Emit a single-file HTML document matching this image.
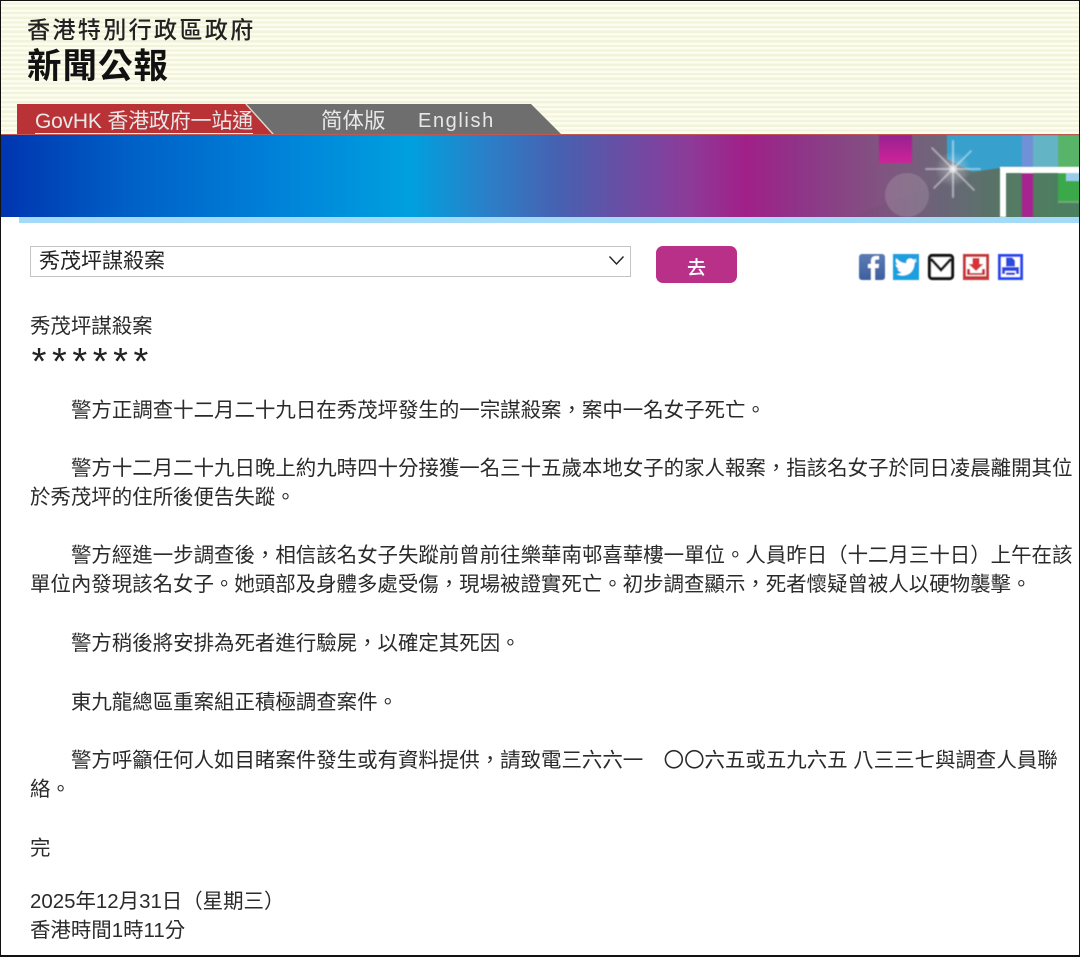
<!DOCTYPE html>
<html lang="zh-Hant"><head><meta charset="utf-8"><title>秀茂坪謀殺案</title>
<style>
html,body{margin:0;padding:0;background:#fff}
#p{position:relative;width:1080px;height:957px;overflow:hidden;background:#fff;font-family:"Liberation Sans","Noto Sans CJK TC",sans-serif;color:#2a2a2a}
.a{position:absolute}
.l{position:absolute;left:30px;font-size:20.45px;line-height:30px;height:30px;white-space:pre;color:#2a2a2a}
.i{left:71px}
.tab{position:absolute;top:105px;height:31px;line-height:33px;font-size:21px;color:#e8e8e8;white-space:pre}
</style></head><body><div id="p">
<div class="a" style="left:0;top:0;width:1080px;height:135px;background:repeating-linear-gradient(180deg,#fdfdef 0,#fdfdef 2.5px,#f3f3dc 2.5px,#f3f3dc 4.7px)"></div>
<div class="a" style="left:27px;top:13px;font-size:23.2px;line-height:34px;letter-spacing:2.2px;color:#222;white-space:pre;font-weight:500">香港特別行政區政府</div>
<div class="a" style="left:27px;top:46px;font-size:34.5px;line-height:42px;letter-spacing:1px;color:#111;font-weight:700;white-space:pre">新聞公報</div>
<svg class="a" style="left:0;top:104px" width="580" height="32" viewBox="0 0 580 32">
<polygon points="245,0 531,0 562,31 274,31" fill="#6e6e6e"/>
<polygon points="17,0 245,0 273,31 17,31" fill="#b83236"/>
<line x1="246" y1="0" x2="274" y2="31" stroke="#e0ddd0" stroke-width="1.2"/>
<rect x="0" y="30" width="17" height="1" fill="#e09070"/>
</svg>
<div class="tab" style="left:35px;letter-spacing:-.2px"><span style="border-bottom:1px solid #eee">GovHK 香港政府一站通</span></div>
<div class="tab" style="left:321px;font-size:21.5px">简体版</div>
<div class="tab" style="left:418px;font-size:20px;letter-spacing:1.6px">English</div>
<div class="a" style="left:0;top:134px;width:1080px;height:1.5px;background:#c05a50"></div>
<svg class="a" style="left:0;top:135px" width="1080" height="82" viewBox="0 0 1080 82">
<defs>
<linearGradient id="g" x1="0" x2="1" y1="0" y2="0">
<stop offset="0" stop-color="#0035b0"/><stop offset=".12" stop-color="#0060c6"/><stop offset=".25" stop-color="#0080d8"/><stop offset=".38" stop-color="#00a0de"/><stop offset=".45" stop-color="#2a80c8"/><stop offset=".52" stop-color="#4860b0"/><stop offset=".64" stop-color="#8e3a98"/><stop offset=".69" stop-color="#a02088"/><stop offset=".74" stop-color="#8f3488"/><stop offset=".82" stop-color="#805580"/><stop offset=".88" stop-color="#6a6a78"/><stop offset=".93" stop-color="#567a64"/><stop offset="1" stop-color="#4a8060"/>
</linearGradient>
<radialGradient id="s"><stop offset="0" stop-color="#fff" stop-opacity=".9"/><stop offset=".3" stop-color="#fff" stop-opacity=".28"/><stop offset="1" stop-color="#fff" stop-opacity="0"/></radialGradient>
<linearGradient id="m" x1="0" x2="0" y1="0" y2="1"><stop offset="0" stop-color="#952090"/><stop offset="1" stop-color="#d0209a"/></linearGradient>
<filter id="b" x="-5%" y="-5%" width="110%" height="110%"><feGaussianBlur stdDeviation=".5"/></filter>
<filter id="b2" x="-20%" y="-20%" width="140%" height="140%"><feGaussianBlur stdDeviation=".9"/></filter>
</defs>
<rect width="1080" height="82" fill="url(#g)"/>
<path d="M850 82Q930 50 1000 32V82Z" fill="#4a4a60" opacity=".08"/>
<g filter="url(#b)">
<polygon points="947,0 1022,0 1022,34 1000,33 972,37 947,24" fill="#38a0cc"/>
<rect x="1022" y="0" width="11" height="33" fill="#7090d8"/>
<rect x="1033" y="0" width="25" height="33" fill="#64b4c4"/>
<rect x="1058" y="0" width="22" height="33" fill="#58b468"/>
<rect x="879" y="0" width="33" height="28" fill="url(#m)"/>
<circle cx="907" cy="60" r="22" fill="#a89aa8" opacity=".36"/>
<rect x="1000" y="32" width="80" height="6" fill="#fff"/>
<rect x="1000" y="32" width="6" height="50" fill="#fff"/>
<rect x="1022" y="38" width="11" height="44" fill="#a82090"/>
<rect x="1058" y="38" width="22" height="30" fill="#3aa848"/>
<rect x="1066" y="38" width="14" height="8" fill="#98cce8"/>
<rect x="1058" y="66" width="22" height="2" fill="#70a878"/>
</g>
<circle cx="953" cy="34" r="18" fill="url(#s)"/>
<g stroke="#fff" stroke-linecap="round" fill="none" opacity=".5" filter="url(#b2)">
<line x1="953" y1="6" x2="953" y2="62" stroke-width="2"/>
<line x1="926" y1="34" x2="980" y2="34" stroke-width="1.8"/>
<line x1="932" y1="13" x2="974" y2="55" stroke-width="1.6"/>
<line x1="971" y1="16" x2="934" y2="53" stroke-width="1.6"/>
</g>
</svg>
<div class="a" style="left:19px;top:217px;width:1061px;height:6px;background:#a2daf8"></div>
<div class="a" style="left:30px;top:246px;width:599px;height:29px;border:1px solid #c4c4c8;background:#fff"></div>
<div class="a" style="left:39px;top:247px;font-size:21px;line-height:30px;color:#222;white-space:pre">秀茂坪謀殺案</div>
<svg class="a" style="left:608px;top:255px" width="18" height="12" viewBox="0 0 18 12"><path d="M1.500 1.500L8.500 9L15.500 1.500" fill="none" stroke="#222" stroke-width="1.4"/></svg>
<div class="a" style="left:656px;top:246px;width:81px;height:37px;border-radius:7px;background:#b93088;color:#fff;font-size:19px;font-weight:500;line-height:45px;text-align:center">去</div>
<svg class="a" style="left:858px;top:253px" width="170" height="28" viewBox="0 0 170 28">
<defs><filter id="ib" x="-5%" y="-5%" width="110%" height="110%"><feGaussianBlur stdDeviation=".45"/></filter>
<linearGradient id="fb" x1="0" x2="0" y1="0" y2="1"><stop offset="0" stop-color="#5b7cb4"/><stop offset="1" stop-color="#3f5f9e"/></linearGradient></defs>
<g filter="url(#ib)">
<rect x="1" y="1" width="26" height="26" rx="3" fill="url(#fb)"/>
<path d="M17 27V15h3.500l.5-4H17V8.500c0-1.300.5-2 2-2h2V3h-3c-3.500 0-5 2-5 5v3h-3v4h3v12z" fill="#fff"/>
<rect x="35" y="1" width="26" height="26" fill="#1a9fe0"/>
<path d="M38.500 21c7 4 18 .5 18-11 1-.7 2-1.600 2.500-2.600-1 .4-2 .7-2.800.8 1-.6 1.800-1.600 2.200-2.700-1 .6-2 1-3 1.200-3-3-8-.5-7 3.500-4 0-7.500-2-10-5-1.300 2.300-.6 5 1.500 6.500-.8 0-1.500-.2-2.200-.6 0 2.300 1.500 4.200 3.800 4.800-.7.200-1.400.2-2.100 0 .6 2 2.400 3.300 4.400 3.400-1.900 1.400-4.300 2-6.800 1.700z" fill="#fff"/>
<rect x="71.500" y="2.500" width="23" height="23" rx="2.500" fill="#fff" stroke="#151515" stroke-width="3.200"/>
<path d="M73 6L83 17L93 6" fill="none" stroke="#151515" stroke-width="2.800"/>
<rect x="105" y="1" width="26" height="26" fill="#c8383a"/>
<rect x="108" y="4" width="20" height="19" fill="#fff"/>
<path d="M114.500 5h7v6h4l-7.500 7-7.500-7h4z" fill="#d83038"/>
<path d="M109 16h3v4h12v-4h3v6h-18z" fill="#c83038"/>
<rect x="140" y="1" width="25" height="26" fill="#2a48f0"/>
<rect x="143" y="4" width="19" height="20" fill="#fff"/>
<path d="M148 4.500h6l3 3v6h-9z" fill="#2a48e0"/>
<path d="M144 14h17v7h-3v-3h-11v3h-3z" fill="#2a48e0"/>
<rect x="148" y="19.500" width="9" height="2.500" fill="#2a48e0"/>
</g>
</svg>
<div class="l" style="top:312px">秀茂坪謀殺案</div>
<div class="l" style="top:347px;left:31.600px;font-size:38px;letter-spacing:5.600px;color:#222">******</div>
<div class="l i" style="top:396px">警方正調查十二月二十九日在秀茂坪發生的一宗謀殺案，案中一名女子死亡。</div>
<div class="l i" style="top:454px">警方十二月二十九日晚上約九時四十分接獲一名三十五歲本地女子的家人報案，指該名女子於同日凌晨離開其位</div>
<div class="l" style="top:483px">於秀茂坪的住所後便告失蹤。</div>
<div class="l i" style="top:541px">警方經進一步調查後，相信該名女子失蹤前曾前往樂華南邨喜華樓一單位。人員昨日（十二月三十日）上午在該</div>
<div class="l" style="top:570px">單位內發現該名女子。她頭部及身體多處受傷，現場被證實死亡。初步調查顯示，死者懷疑曾被人以硬物襲擊。</div>
<div class="l i" style="top:629px">警方稍後將安排為死者進行驗屍，以確定其死因。</div>
<div class="l i" style="top:688px">東九龍總區重案組正積極調查案件。</div>
<div class="l i" style="top:746px">警方呼籲任何人如目睹案件發生或有資料提供，請致電三六六一　〇〇六五或五九六五 八三三七與調查人員聯</div>
<div class="l" style="top:775px">絡。</div>
<div class="l" style="top:834px">完</div>
<div class="l" style="top:887px">2025年12月31日（星期三）</div>
<div class="l" style="top:916px">香港時間1時11分</div>
<div class="a" style="left:0;top:0;width:1080px;height:957px;box-sizing:border-box;border:1px solid #111;border-bottom-width:2px;border-top-width:1px"></div>
</div></body></html>
